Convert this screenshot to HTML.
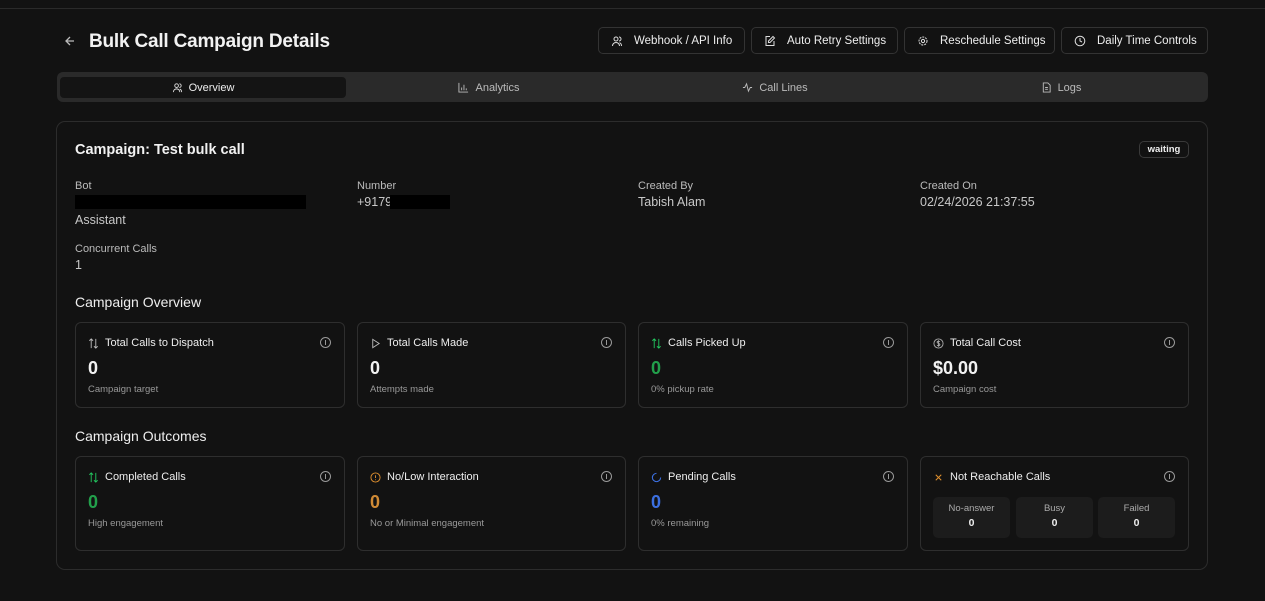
<!DOCTYPE html>
<html><head><meta charset="utf-8"><style>
*{box-sizing:border-box;margin:0;padding:0}
body{width:1265px;height:601px;background:#121212;color:#e8e8e8;font-family:"Liberation Sans",sans-serif;position:relative;overflow:hidden}
.abs{position:absolute}
.topline{left:0;top:8px;width:1265px;height:1px;background:#2a2a2a}
h1{position:absolute;left:89px;top:31px;font-size:19px;font-weight:bold;color:#f2f2f2;letter-spacing:-0.2px}
.btn{position:absolute;top:27px;height:27px;border:1px solid #333;border-radius:5px;font-size:11.5px;color:#eee;display:flex;align-items:center;padding-left:12px;gap:11px}
.btn svg{width:12px;height:12px}
.tabs{left:57px;top:72px;width:1151px;height:30px;background:#2a2a2a;border-radius:6px}
.tab{position:absolute;top:5px;height:21px;display:flex;align-items:center;justify-content:center;gap:6px;font-size:11px;color:#bbb}
.tab.active{background:#141414;border-radius:4px;color:#eee}
.card{left:56px;top:121px;width:1152px;height:449px;border:1px solid #2c2c2c;border-radius:9px}
.lbl{position:absolute;font-size:11px;color:#bbb}
.val{position:absolute;font-size:12.5px;color:#c8c8c8}
.sec{position:absolute;font-size:14px;color:#eee}
.st{position:absolute;border:1px solid #2e2e2e;border-radius:6px;width:270px}
.st .t{position:absolute;left:12px;top:14px;font-size:11px;color:#eee;display:flex;align-items:center;gap:6px}
.st .t svg{width:11px;height:11px}
.st .i{position:absolute;right:13px;top:14px;width:11px;height:11px;border:1px solid #999;border-radius:50%}
.st .i:after{content:"";position:absolute;left:4px;top:2px;width:1px;height:5px;background:#999}
.st .n{position:absolute;left:12px;top:35px;font-size:18px;font-weight:bold;color:#f2f2f2}
.st .s{position:absolute;left:12px;top:61px;font-size:9.5px;color:#999}
.mini{position:absolute;top:40px;width:77px;height:41px;background:#1c1c1c;border-radius:5px;text-align:center;font-size:9.5px;color:#aaa;padding-top:6px}
.mini b{display:block;color:#eee;font-size:10.5px;margin-top:3px}
</style></head><body>
<div class="abs topline"></div>
<svg class="abs" style="left:64px;top:35px" width="12" height="12" viewBox="0 0 12 12"><path d="M10 6H2M6 2L2 6l4 4" stroke="#bbb" stroke-width="1.3" fill="none"/></svg>
<h1>Bulk Call Campaign Details</h1>

<div class="btn" style="left:598px;width:147px"><svg viewBox="0 0 12 12" fill="none" stroke="#ddd" stroke-width="1"><circle cx="5" cy="4" r="2"/><path d="M1.5 11c0-2 1.5-3.5 3.5-3.5s3.5 1.5 3.5 3.5M8 2a2 2 0 010 4M10.5 11c0-1.5-.7-2.8-2-3.3"/></svg>Webhook / API Info</div>
<div class="btn" style="left:751px;width:147px"><svg viewBox="0 0 12 12" fill="none" stroke="#ddd" stroke-width="1"><path d="M6 1.5H2v9h8V6"/><path d="M9 1.5l1.5 1.5L6 7.5H4.5V6z"/></svg>Auto Retry Settings</div>
<div class="btn" style="left:904px;width:151px"><svg viewBox="0 0 12 12" fill="none" stroke="#ddd" stroke-width="1"><circle cx="6" cy="6" r="1.6"/><circle cx="6" cy="6" r="4" stroke-dasharray="2 1"/></svg>Reschedule Settings</div>
<div class="btn" style="left:1061px;width:147px"><svg viewBox="0 0 12 12" fill="none" stroke="#ddd" stroke-width="1"><circle cx="6" cy="6" r="4.8"/><path d="M6 3v3l2 1"/></svg>Daily Time Controls</div>

<div class="abs tabs">
<div class="tab active" style="left:3px;width:286px"><svg width="11" height="11" viewBox="0 0 12 12" fill="none" stroke="#ddd" stroke-width="1"><circle cx="5" cy="4" r="2"/><path d="M1.5 11c0-2 1.5-3.5 3.5-3.5s3.5 1.5 3.5 3.5M8 2a2 2 0 010 4M10.5 11c0-1.5-.7-2.8-2-3.3"/></svg>Overview</div>
<div class="tab" style="left:289px;width:286px"><svg width="11" height="11" viewBox="0 0 12 12" fill="none" stroke="#bbb" stroke-width="1"><path d="M1 1v10h10M4 9V6M6.5 9V3M9 9V7"/></svg>Analytics</div>
<div class="tab" style="left:575px;width:286px"><svg width="11" height="11" viewBox="0 0 12 12" fill="none" stroke="#bbb" stroke-width="1"><path d="M1 6h2l2-4 2 8 2-4h2"/></svg>Call Lines</div>
<div class="tab" style="left:861px;width:286px"><svg width="11" height="11" viewBox="0 0 12 12" fill="none" stroke="#bbb" stroke-width="1"><path d="M2.5 1h5l2.5 2.5V11h-7.5zM4.5 6h3M4.5 8h3"/></svg>Logs</div>
</div>

<div class="abs card"></div>
<div class="abs" style="left:75px;top:142px;font-size:14.5px;font-weight:bold;color:#f2f2f2">Campaign: Test bulk call</div>
<div class="abs" style="left:1139px;top:141px;width:50px;height:17px;border:1px solid #3a3a3a;border-radius:5px;font-size:9.5px;font-weight:bold;text-align:center;line-height:15px;color:#eee">waiting</div>

<div class="lbl" style="left:75px;top:180px">Bot</div>
<div class="abs" style="left:75px;top:195px;width:231px;height:14px;background:#000"></div>
<div class="val" style="left:75px;top:213px">Assistant</div>
<div class="lbl" style="left:357px;top:180px">Number</div>
<div class="val" style="left:357px;top:195px">+9179</div>
<div class="abs" style="left:390px;top:195px;width:60px;height:14px;background:#000"></div>
<div class="lbl" style="left:638px;top:180px">Created By</div>
<div class="val" style="left:638px;top:195px">Tabish Alam</div>
<div class="lbl" style="left:920px;top:180px">Created On</div>
<div class="val" style="left:920px;top:195px">02/24/2026 21:37:55</div>
<div class="lbl" style="left:75px;top:243px">Concurrent Calls</div>
<div class="val" style="left:75px;top:258px">1</div>

<div class="sec" style="left:75px;top:294px">Campaign Overview</div>
<div class="st" style="left:75px;top:322px;height:86px"><div class="t"><svg viewBox="0 0 12 12" fill="none" stroke="#bbb" stroke-width="1"><path d="M3.5 11V1M1.5 3l2-2 2 2M8.5 1v10M6.5 9l2 2 2-2"/></svg>Total Calls to Dispatch</div><div class="i"></div><div class="n">0</div><div class="s">Campaign target</div></div>
<div class="st" style="left:357px;top:322px;height:86px;width:269px"><div class="t"><svg viewBox="0 0 12 12" fill="none" stroke="#bbb" stroke-width="1"><path d="M3 1.5l7 4.5-7 4.5z"/></svg>Total Calls Made</div><div class="i"></div><div class="n">0</div><div class="s">Attempts made</div></div>
<div class="st" style="left:638px;top:322px;height:86px;width:270px"><div class="t"><svg viewBox="0 0 12 12" fill="none" stroke="#22c55e" stroke-width="1"><path d="M3.5 11V1M1.5 3l2-2 2 2M8.5 1v10M6.5 9l2 2 2-2"/></svg>Calls Picked Up</div><div class="i"></div><div class="n" style="color:#22a04b">0</div><div class="s">0% pickup rate</div></div>
<div class="st" style="left:920px;top:322px;height:86px;width:269px"><div class="t"><svg viewBox="0 0 12 12" fill="none" stroke="#aaa" stroke-width="1"><circle cx="6" cy="6" r="5"/><path d="M7.5 4.2c-.4-.5-1-.7-1.5-.7-.9 0-1.5.5-1.5 1.2 0 1.6 3 .8 3 2.5 0 .7-.7 1.2-1.5 1.2-.6 0-1.200-.3-1.5-.7M6 2.5v7"/></svg>Total Call Cost</div><div class="i"></div><div class="n">$0.00</div><div class="s">Campaign cost</div></div>

<div class="sec" style="left:75px;top:428px">Campaign Outcomes</div>
<div class="st" style="left:75px;top:456px;height:95px"><div class="t"><svg viewBox="0 0 12 12" fill="none" stroke="#22c55e" stroke-width="1"><path d="M3.5 11V1M1.5 3l2-2 2 2M8.5 1v10M6.5 9l2 2 2-2"/></svg>Completed Calls</div><div class="i"></div><div class="n" style="color:#22a04b">0</div><div class="s">High engagement</div></div>
<div class="st" style="left:357px;top:456px;height:95px;width:269px"><div class="t"><svg viewBox="0 0 12 12" fill="none" stroke="#e0902f" stroke-width="1"><circle cx="6" cy="6" r="5"/><path d="M6 3.5v3M6 8v.8"/></svg>No/Low Interaction</div><div class="i"></div><div class="n" style="color:#d08a35">0</div><div class="s">No or Minimal engagement</div></div>
<div class="st" style="left:638px;top:456px;height:95px;width:270px"><div class="t"><svg viewBox="0 0 12 12" fill="none" stroke="#3b6fe0" stroke-width="1.2"><path d="M10.5 6A4.5 4.5 0 116 1.5"/></svg>Pending Calls</div><div class="i"></div><div class="n" style="color:#3b6fe0">0</div><div class="s">0% remaining</div></div>
<div class="st" style="left:920px;top:456px;height:95px;width:269px"><div class="t"><svg viewBox="0 0 12 12" fill="none" stroke="#e0902f" stroke-width="1.1"><path d="M3 3l6 6M9 3l-6 6"/></svg>Not Reachable Calls</div><div class="i"></div>
<div class="mini" style="left:12px">No-answer<b>0</b></div><div class="mini" style="left:95px">Busy<b>0</b></div><div class="mini" style="left:177px">Failed<b>0</b></div></div>
</body></html>
